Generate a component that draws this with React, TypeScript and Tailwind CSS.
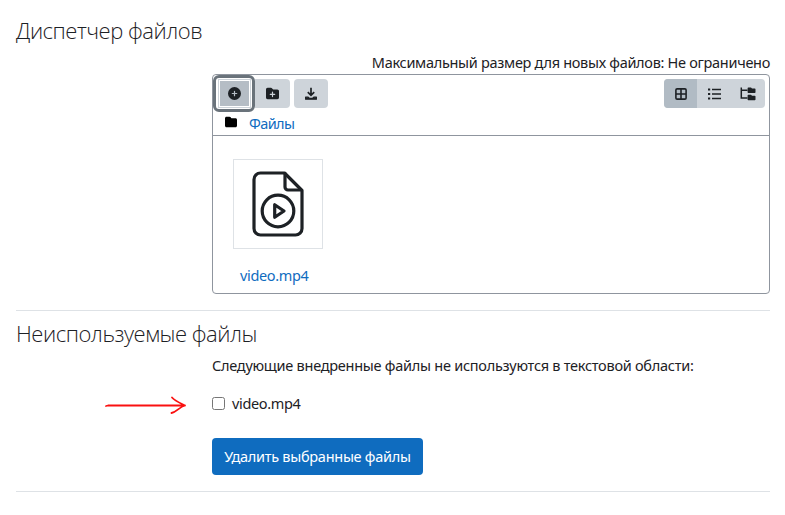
import React from 'react';
import { FaCirclePlus, FaFolder, FaFolderPlus } from 'react-icons/fa6';

function DownloadIcon() {
  return (
    <svg width="14" height="14" viewBox="0 0 14 14" fill="none" stroke="#1d2125">
      <path d="M7 .8V8M3.8 5.2 7 8.4l3.2-3.2" strokeWidth="1.7" />
      <path d="M1.6 10.2H4.2L5.6 11.4H8.4L9.8 10.2H12.4V12.2H1.6Z" fill="#1d2125" strokeWidth="1.2" strokeLinejoin="round" />
    </svg>
  );
}

function GridIcon() {
  return (
    <svg width="12" height="12" viewBox="0 0 12 12" fill="none" stroke="#1d2125" strokeWidth="1.6">
      <rect x=".9" y=".9" width="10.2" height="10.2" rx="1.2" />
      <path d="M6 1v10M1 6h10" />
    </svg>
  );
}

function ListIcon() {
  return (
    <svg width="13" height="12" viewBox="0 0 13 12" fill="#1d2125">
      <path d="M0 .4h2.2v2.2H0zM0 4.9h2.2v2.2H0zM0 9.4h2.2v2.2H0zM4 .7h9v1.6H4zM4 5.2h9v1.6H4zM4 9.7h9v1.6H4z" />
    </svg>
  );
}

function TreeIcon() {
  return (
    <svg width="16" height="14" viewBox="0 0 16 14" fill="#1d2125">
      <path d="M1.300 .5V11H7.500M1.300 3.300H7.500" fill="none" stroke="#1d2125" strokeWidth="1.500" />
      <path d="M8.300 .5H11L12 1.500H14.800Q15.500 1.500 15.500 2.200V5.300Q15.500 6 14.800 6H8.300Q7.600 6 7.600 5.300V1.200Q7.600 .5 8.300 .5ZM8.300 7.800H11L12 8.800H14.800Q15.500 8.800 15.500 9.500V12.600Q15.500 13.300 14.800 13.300H8.300Q7.600 13.300 7.600 12.600V8.500Q7.600 7.800 8.300 7.800Z" />
    </svg>
  );
}

function VideoFileIcon() {
  return (
    <svg width="52" height="66" viewBox="0 0 52 66" fill="none" stroke="#1d2125" strokeWidth="3.2" strokeLinejoin="round" strokeLinecap="round">
      <path d="M8.500 2H32.500L50 19.500V57.500a6.500 6.500 0 0 1-6.500 6.500H8.500A6.500 6.500 0 0 1 2 57.500V8.500A6.500 6.500 0 0 1 8.500 2Z" />
      <path d="M33 2.500V16a3 3 0 0 0 3 3H49" />
      <circle cx="26" cy="40" r="15.800" />
      <path d="M22.700 33.700V46.300L32 40Z" />
    </svg>
  );
}

export default function App() {
  return (
    <div className="h-[515px] w-[785px] overflow-hidden bg-white pl-4 pr-[15px] pt-[15px] font-['Noto_Sans','Open_Sans',sans-serif] text-[14.5px] text-[#1d2125]">
      <section className="h-[296px] border-b border-[#dee2e6]">
        <h3 className="h-[37px] whitespace-nowrap font-['Open_Sans',sans-serif] text-[22px] font-light leading-[30px] tracking-[-0.47px]">
          <span>Диспетчер файлов</span>
        </h3>
        <div className="h-[22px] whitespace-nowrap text-right leading-[20px] tracking-[-0.3px]">
          <span>Максимальный размер для новых файлов: Не ограничено</span>
        </div>
        <div className="ml-[196px] h-[220px] rounded-[4px] border border-[#8f959e]">
          <div className="h-[61px] border-b border-[#8f959e]">
            <div className="flex h-[37px] justify-between pr-1">
              <div className="flex items-start">
                <button className="flex h-[37px] w-[42px] items-center justify-center rounded-[6px] border-[3px] border-[#6a737b] bg-white">
                  <span className="flex h-[25px] w-[29px] items-center justify-center bg-[#b5bdc5] outline outline-1 outline-offset-1 outline-[#ced4da]">
                    <FaCirclePlus size={13} />
                  </span>
                </button>
                <button className="mt-1 flex h-[29px] w-[35px] items-center justify-center rounded-r-[4px] bg-[#ced4da]">
                  <FaFolderPlus size={13} />
                </button>
                <button className="ml-1 mt-1 flex h-[29px] w-[34px] items-center justify-center rounded-[4px] bg-[#ced4da]">
                  <DownloadIcon />
                </button>
              </div>
              <div className="mt-1 flex h-[29px] overflow-hidden rounded-[4px] bg-[#ced4da]">
                <button className="flex w-[33px] items-center justify-center bg-[#b1bbc4]"><GridIcon /></button>
                <button className="flex w-[34px] items-center justify-center"><ListIcon /></button>
                <button className="flex w-[34px] items-center justify-center"><TreeIcon /></button>
              </div>
            </div>
            <div className="flex h-[23px] items-center pl-3">
              <FaFolder size={12} className="mb-1 text-black" />
              <a className="ml-3 tracking-[-0.6px] text-[#0f6cbf]">Файлы</a>
            </div>
          </div>
          <div className="ml-5 mt-[23px] w-[90px]">
            <div className="flex h-[90px] items-center justify-center border border-[#dee2e6]"><VideoFileIcon /></div>
            <div className="mt-[15px] whitespace-nowrap pl-[7px] leading-[22px] tracking-[-0.35px] text-[#0f6cbf]"><span>video.mp4</span></div>
          </div>
        </div>
      </section>
      <section className="h-[181px] border-b border-[#dee2e6] pt-[7px]">
        <h3 className="h-[36px] whitespace-nowrap font-['Open_Sans',sans-serif] text-[22px] font-light leading-[30px] tracking-[-0.47px]">
          <span>Неиспользуемые файлы</span>
        </h3>
        <div className="ml-[196px] whitespace-nowrap leading-[22px] tracking-[-0.26px]">
          <span>Следующие внедренные файлы не используются в текстовой области:</span>
        </div>
        <div className="mt-4 flex h-[22px] items-center">
          <svg className="ml-[88px] mr-[25px] mt-[3px]" width="83" height="20" viewBox="0 0 83 20" fill="none" stroke="#fa1010" strokeWidth="1.800" strokeLinecap="round" strokeLinejoin="round">
            <path d="M2 11 4 10.500 81 10.500M68 2.500C71 6 76 8 81 10.500 75 12 73 17 67.500 18" />
          </svg>
          <input type="checkbox" className="m-0 h-[13px] w-[13px]" />
          <span className="ml-[7px] pt-0.5 tracking-[-0.35px]">video.mp4</span>
        </div>
        <button className="ml-[196px] mt-[24px] flex h-[37px] w-[211px] items-center justify-center whitespace-nowrap rounded-[4px] bg-[#0f6cbf] text-white tracking-[-0.28px]">
          <span>Удалить выбранные файлы</span>
        </button>
      </section>
    </div>
  );
}
